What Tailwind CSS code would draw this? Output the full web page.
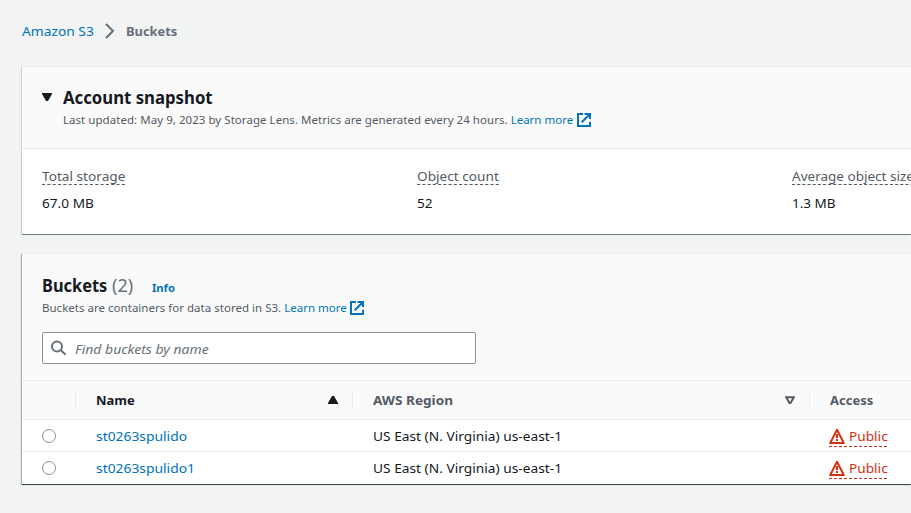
<!DOCTYPE html>
<html lang="en">
<head>
<meta charset="utf-8">
<title>Amazon S3 Buckets</title>
<script src="https://cdn.jsdelivr.net/npm/@tailwindcss/browser@4"></script>
</head>
<body class="h-[513px] w-[911px] overflow-hidden bg-[#f2f3f3] font-['Noto_Sans',sans-serif] text-[13px] leading-5 text-[#16191f]">
<svg class="hidden">
  <symbol id="external" viewBox="0 0 14 14"><path d="M6 1H1v12h12V8.8M7.5 1H13v5M12.5 1.5 4.7 9.3" fill="none" stroke="currentColor" stroke-width="2"/></symbol>
  <symbol id="warning" viewBox="0 0 16 16"><path d="M8 1.7 14.8 15H1.2Z" fill="none" stroke="currentColor" stroke-width="2" stroke-linejoin="round"/><path d="M8 6v4M8 11v2" stroke="currentColor" stroke-width="2"/></symbol>
</svg>
<div class="w-[911px] overflow-hidden whitespace-nowrap pb-2 pl-[22px] pt-[21px]">
  <nav class="flex h-5 items-center">
    <a class="w-[72px] origin-left scale-x-[1.06] text-[#0073bb]">Amazon S3</a>
    <svg class="ml-[11px] mr-[10.6px] h-4 w-[10px]" viewBox="0 0 10 16" fill="none" stroke="#687078" stroke-width="2"><path d="M1 1l7 7-7 7"/></svg>
    <span class="origin-left scale-x-[0.99] font-bold text-[#687078]">Buckets</span>
  </nav>

  <section class="mt-[25px] h-[168px] border-t border-[#eaeded] bg-white shadow-[-1px_1px_1px_0_rgba(0,28,36,0.15),0_1px_0_0_#879596]">
    <header class="flex h-[82px] border-b border-[#eaeded] bg-[#fafafa] pl-5 pt-5">
      <svg class="mt-[6px] h-[8px] w-[10px]" viewBox="0 0 10 8" fill="#16191f"><path d="M0 0h10v1L6 8H4L0 1Z"/></svg>
      <div class="-mt-px ml-[11px]">
        <h2 class="h-[23px] origin-left scale-x-[0.93] text-[18px] font-bold leading-[22px]">Account snapshot</h2>
        <p class="flex items-center text-[11.5px] leading-[22px] text-[#545b64]"><span class="tracking-[0.045px]">Last updated: May 9, 2023 by Storage Lens. Metrics are generated every 24 hours.</span><a class="ml-[3px] text-[#0073bb]">Learn more</a><svg class="ml-1 size-[14px] text-[#0073bb]"><use href="#external"/></svg></p>
      </div>
    </header>
    <dl class="grid grid-cols-[375px_375px_375px] pl-5 pt-[19px]">
      <div class="origin-left scale-x-[1.05]"><dt class="h-[17px] w-fit border-b border-dashed border-[#545b64] leading-[17px] text-[#545b64]">Total storage</dt><dd class="mt-2">67.0 MB</dd></div>
      <div class="origin-left scale-x-[1.05]"><dt class="h-[17px] w-fit border-b border-dashed border-[#545b64] leading-[17px] text-[#545b64]">Object count</dt><dd class="mt-2">52</dd></div>
      <div class="origin-left scale-x-[1.04]"><dt class="h-[17px] w-fit border-b border-dashed border-[#545b64] leading-[17px] text-[#545b64]">Average object size</dt><dd class="mt-2">1.3 MB</dd></div>
    </dl>
  </section>

  <section class="mt-[19px] h-[231px] border-t border-[#eaeded] bg-white shadow-[-1px_1px_1px_0_rgba(0,28,36,0.3),0_1px_0_0_#545b64]">
    <header class="h-[126px] bg-[#fafafa] pl-5 pt-5">
      <div class="flex h-[23px] items-start text-[18px] leading-[22px]"><h2 class="w-[70px] origin-left scale-x-[0.91] font-bold">Buckets</h2><span class="w-10 text-[#687078]">(2)</span><a class="pt-[3px] text-[11.2px] font-bold text-[#0073bb]">Info</a></div>
      <p class="flex items-center text-[11.5px] leading-[22px] text-[#545b64]"><span class="tracking-[0.02px]">Buckets are containers for data stored in S3.</span><a class="ml-[3px] text-[#0073bb]">Learn more</a><svg class="ml-[3px] size-[14px] text-[#0073bb]"><use href="#external"/></svg></p>
      <div class="mt-[13px] flex h-8 w-[434px] items-center rounded-[2px] border border-[#879596] bg-white pl-2">
        <svg class="size-4" viewBox="0 0 16 16" fill="none" stroke="#687078" stroke-width="2"><circle cx="6" cy="6.5" r="5"/><path d="m9.8 10.2 4.9 4.5"/></svg>
        <span class="ml-2 origin-left scale-x-[1.075] pt-0.5 italic text-[#687078]">Find buckets by name</span>
      </div>
    </header>
    <div class="grid h-10 grid-cols-[54px_277px_457px_200px] items-center border-y border-[#eaeded] bg-[#fafafa] font-bold text-[#545b64]">
      <div class="h-5 border-r border-[#eaeded]"></div>
      <div class="flex h-5 items-center justify-between border-r border-[#eaeded] pl-5 pr-[14px] text-[#16191f]"><span>Name</span><svg class="h-2 w-[10px]" viewBox="0 0 10 8"><path d="M0 8V7L4 0h2l4 7v1Z" fill="currentColor"/></svg></div>
      <div class="flex h-5 items-center justify-between border-r border-[#eaeded] pl-5 pr-[14px]"><span class="origin-left scale-x-[1.045]">AWS Region</span><svg class="h-[9px] w-[10px]" viewBox="0 0 10 9"><path d="M1.1 1.2h7.8L5.5 7h-1Z" fill="none" stroke="currentColor" stroke-width="2"/></svg></div>
      <div class="pl-5">Access</div>
    </div>
    <div class="grid h-8 grid-cols-[54px_277px_457px_200px] items-center border-b border-[#eaeded]">
      <div class="pl-5"><div class="size-[14px] rounded-full border border-[#879596]"></div></div><a class="ml-5 origin-left scale-x-[1.065] text-[#0073bb]">st0263spulido</a><span class="ml-5 origin-left scale-x-[1.057]">US East (N. Virginia) us-east-1</span>
      <div class="ml-[19px] mt-[3px] flex h-[19px] w-[58px] items-center border-b border-dashed border-[#d13212] pb-0.5 text-[#d13212]"><svg class="size-4"><use href="#warning"/></svg><span class="ml-[3.5px] origin-left scale-x-[1.05]">Public</span></div>
    </div>
    <div class="grid h-8 grid-cols-[54px_277px_457px_200px] items-center">
      <div class="pl-5"><div class="size-[14px] rounded-full border border-[#879596]"></div></div><a class="ml-5 origin-left scale-x-[1.065] text-[#0073bb]">st0263spulido1</a><span class="ml-5 origin-left scale-x-[1.057]">US East (N. Virginia) us-east-1</span>
      <div class="ml-[19px] mt-[3px] flex h-[19px] w-[58px] items-center border-b border-dashed border-[#d13212] pb-0.5 text-[#d13212]"><svg class="size-4"><use href="#warning"/></svg><span class="ml-[3.5px] origin-left scale-x-[1.05]">Public</span></div>
    </div>
  </section>
</div>
</body>
</html>
